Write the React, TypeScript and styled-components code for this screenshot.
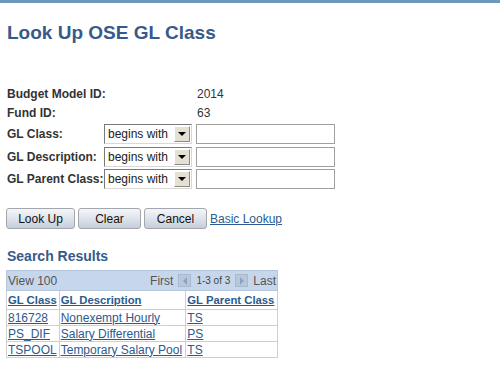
import React from "react";
import styled, { createGlobalStyle } from "styled-components";

const Global = createGlobalStyle`
  html, body { margin: 0; padding: 0; background: #fff; }
  body { font-family: "Liberation Sans", Arial, sans-serif; }
`;

const Page = styled.div`
  width: 500px;
  height: 369px;
  border-top: 3px solid #6f97bb;
  box-sizing: border-box;
  padding: 0 0 0 6px;
`;

const Title = styled.h1`
  margin: 19px 0 0 1px;
  font-size: 19px;
  font-weight: bold;
  color: #375a8a;
  line-height: 22px;
`;

const Form = styled.div`
  margin-top: 40px;
  display: grid;
  grid-template-columns: 98px auto auto;
  align-items: center;
  width: max-content;
`;

const Label = styled.div<{ h: number }>`
  font-size: 12px;
  font-weight: bold;
  color: #333;
  padding-left: 1px;
  height: ${(p) => p.h}px;
  white-space: nowrap;
  display: flex;
  align-items: center;
`;

const Value = styled.div`
  grid-column: span 2;
  font-size: 12px;
  color: #333;
  padding-left: 93px;
`;

const Select = styled.div`
  width: 88px;
  height: 20px;
  box-sizing: border-box;
  border: 1px solid;
  border-color: #7a7a7a #d8d8d8 #d8d8d8 #7a7a7a;
  background: #fff;
  display: flex;
  align-items: center;
  font-size: 12px;
  color: #222;
  padding-left: 3px;
  justify-content: space-between;
`;

const Arrow = styled.span`
  width: 16px;
  height: 16px;
  margin-right: 1px;
  background: #e4e0d4;
  border: 1px solid;
  border-color: #fff #8d8a80 #8d8a80 #fff;
  box-sizing: border-box;
  display: flex;
  align-items: center;
  justify-content: center;
  &::after {
    content: "";
    border-left: 4px solid transparent;
    border-right: 4px solid transparent;
    border-top: 4px solid #000;
  }
`;

const Input = styled.div`
  width: 139px;
  height: 20px;
  margin-left: 4px;
  box-sizing: border-box;
  border: 1px solid #a0a0a0;
  background: #fff;
`;

const Buttons = styled.div`
  margin-top: 18px;
  display: flex;
  align-items: center;
  gap: 3px;
`;

const Button = styled.div<{ w: number }>`
  width: ${(p) => p.w}px;
  height: 21px;
  box-sizing: border-box;
  border: 1px solid #a4a8ae;
  border-radius: 3px;
  background: linear-gradient(#f3f5f8 0%, #e1e6ee 45%, #c4cedb 100%);
  font-size: 12px;
  color: #111;
  display: flex;
  align-items: center;
  justify-content: center;
`;

const Link = styled.a`
  font-size: 12px;
  color: #2c5a8e;
  text-decoration: underline;
  cursor: pointer;
`;

const SubTitle = styled.h2`
  margin: 19px 0 0 1px;
  font-size: 14px;
  font-weight: bold;
  color: #375a8a;
  line-height: 16px;
`;

const Grid = styled.table`
  margin-top: 6px;
  border-collapse: collapse;
  width: 272px;
  font-size: 12px;
`;

const NavRow = styled.td`
  background: #c6d7ec;
  border: 1px solid #b5c7de;
  height: 19px;
  padding: 0 1px;
  color: #555;
`;

const NavInner = styled.div`
  display: flex;
  align-items: center;
  justify-content: space-between;
`;

const NavRight = styled.div`
  display: flex;
  align-items: center;
  gap: 5px;
`;

const Small = styled.span`
  font-size: 10px;
  color: #444;
`;

const NavBtn = styled.span<{ dir: "l" | "r" }>`
  width: 13px;
  height: 13px;
  background: #b8c8dc;
  border: 1px solid #aab9cc;
  box-sizing: border-box;
  display: inline-flex;
  align-items: center;
  justify-content: center;
  &::after {
    content: "";
    border-top: 4px solid transparent;
    border-bottom: 4px solid transparent;
    ${(p) =>
      p.dir === "l"
        ? "border-right: 4px solid #8da3bd;"
        : "border-left: 4px solid #8da3bd;"}
  }
`;

const Th = styled.th`
  text-align: left;
  border: 1px solid #cfcfcf;
  padding: 0 1px;
  height: 18px;
  font-weight: bold;
  white-space: nowrap;
`;

const Td = styled.td`
  border: 1px solid #cfcfcf;
  padding: 0 1px;
  height: 15px;
  white-space: nowrap;
`;

const HeadLink = styled(Link)`
  font-weight: bold;
  font-size: 11.3px;
`;

const rows = [
  ["816728", "Nonexempt Hourly", "TS"],
  ["PS_DIF", "Salary Differential", "PS"],
  ["TSPOOL", "Temporary Salary Pool", "TS"],
];

const criteria: [string, number][] = [
  ["GL Class:", 23],
  ["GL Description:", 23],
  ["GL Parent Class:", 22],
];

export default function App() {
  return (
    <Page>
      <Global />
      <Title>Look Up OSE GL Class</Title>
      <Form>
        <Label h={19}>Budget Model ID:</Label>
        <Value>2014</Value>
        <Label h={19}>Fund ID:</Label>
        <Value>63</Value>
        {criteria.map(([c, h]) => (
          <React.Fragment key={c}>
            <Label h={h}>{c}</Label>
            <Select>
              begins with
              <Arrow />
            </Select>
            <Input />
          </React.Fragment>
        ))}
      </Form>
      <Buttons>
        <Button w={69}>Look Up</Button>
        <Button w={63}>Clear</Button>
        <Button w={63}>Cancel</Button>
        <Link>Basic Lookup</Link>
      </Buttons>
      <SubTitle>Search Results</SubTitle>
      <Grid>
        <tbody>
          <tr>
            <NavRow colSpan={3}>
              <NavInner>
                <span>View 100</span>
                <NavRight>
                  <span>First</span>
                  <NavBtn dir="l" />
                  <Small>1-3 of 3</Small>
                  <NavBtn dir="r" />
                  <span>Last</span>
                </NavRight>
              </NavInner>
            </NavRow>
          </tr>
          <tr>
            <Th>
              <HeadLink>GL Class</HeadLink>
            </Th>
            <Th>
              <HeadLink>GL Description</HeadLink>
            </Th>
            <Th>
              <HeadLink>GL Parent Class</HeadLink>
            </Th>
          </tr>
          {rows.map((r) => (
            <tr key={r[0]}>
              {r.map((c, i) => (
                <Td key={i}>
                  <Link>{c}</Link>
                </Td>
              ))}
            </tr>
          ))}
        </tbody>
      </Grid>
    </Page>
  );
}
